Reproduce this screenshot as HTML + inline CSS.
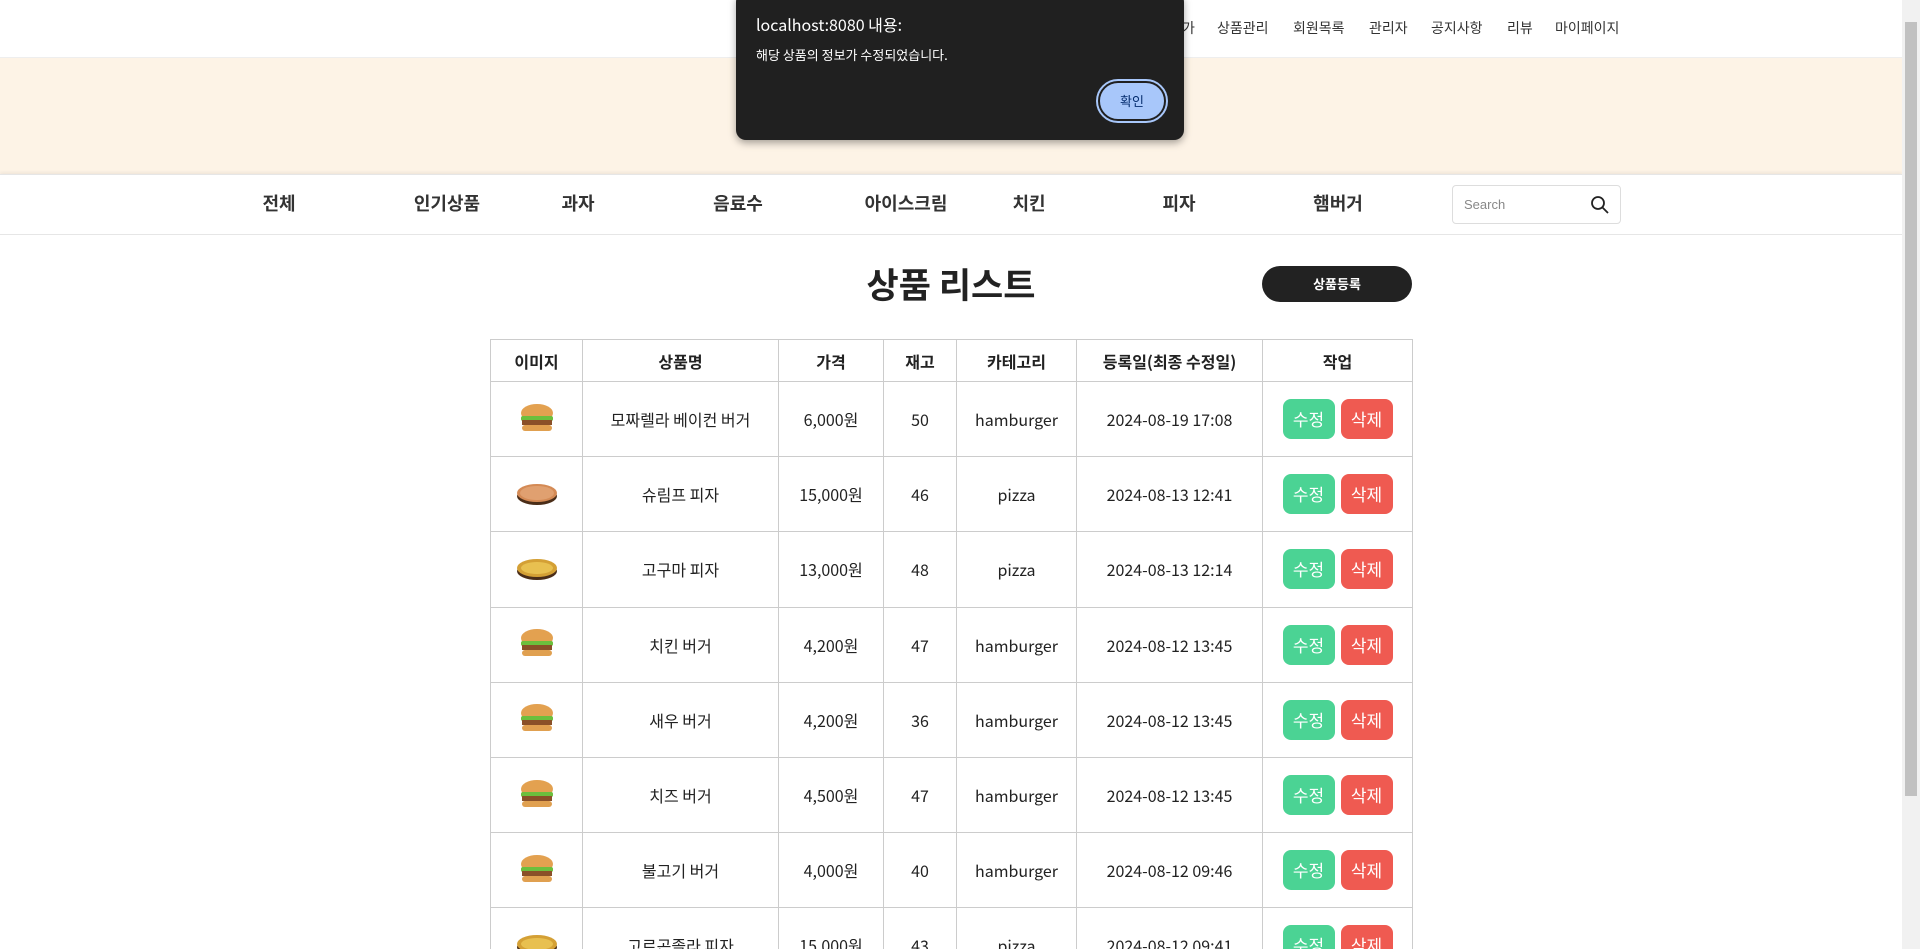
<!DOCTYPE html>
<html><head><meta charset="utf-8">
<style>
*{margin:0;padding:0;box-sizing:border-box}
html,body{width:1920px;height:949px;overflow:hidden}
body{background:#fff;font-family:"Liberation Sans","Noto Sans CJK KR",sans-serif;color:#222;position:relative}
#wrap{position:absolute;left:0;top:0;width:1920px;height:949px;overflow:hidden}
.top{position:absolute;left:0;top:0;width:1902px;height:58px;border-bottom:1px solid #eee;background:#fff}
.top span{position:absolute;top:18px;font-size:14px;color:#333;font-family:"Noto Sans CJK KR",sans-serif}
.banner{position:absolute;left:0;top:58px;width:1902px;height:116px;background:#fdf3e6}
.cat{position:absolute;left:0;top:174px;width:1902px;height:61px;border-top:1px solid #e6e6e6;border-bottom:1px solid #e6e6e6;box-shadow:0 -2px 3px rgba(0,0,0,.05);background:#fff}
.cat span{position:absolute;top:15px;font-size:18px;font-weight:bold;color:#333;transform:translateX(-50%);font-family:"Noto Sans CJK KR",sans-serif}
.search{position:absolute;left:1452px;top:185px;width:169px;height:39px;border:1px solid #ddd;border-radius:4px}
.search span{position:absolute;left:11px;top:11px;font-size:13px;color:#888}
.search svg{position:absolute;right:10px;top:9px}
h1{position:absolute;left:0;width:1902px;text-align:center;top:258px;font-size:35px;font-weight:bold;color:#222;font-family:"Noto Sans CJK KR",sans-serif}
.reg{position:absolute;left:1262px;top:266px;width:150px;height:36px;border-radius:18px;background:#222;color:#fff;font-size:13px;font-weight:bold;text-align:center;line-height:36px;font-family:"Noto Sans CJK KR",sans-serif}
table{position:absolute;left:490px;top:339px;border-collapse:collapse;table-layout:fixed;font-size:16px;font-family:"Noto Sans CJK KR",sans-serif}
td,th{border:1px solid #ccc;text-align:center;color:#222;line-height:20px}
th{height:42px;font-weight:bold;font-size:16px}
td{height:75.2px}
.b{display:inline-block;width:52px;height:40px;line-height:40px;border-radius:8px;color:#fff;font-size:17px;vertical-align:middle}
.g{background:#4bd394}.r{background:#ef5a51;margin-left:6px}
.dlg{position:absolute;left:736px;top:-8px;width:448px;height:148px;background:#202020;border-radius:10px;box-shadow:0 3px 8px rgba(0,0,0,.35);color:#fff;font-family:"Noto Sans CJK KR",sans-serif}
.dlg .t{position:absolute;left:20px;top:20px;font-size:16px}
.dlg .m{position:absolute;left:20px;top:53px;font-size:13px}
.dlg .ok{position:absolute;left:362px;top:89px;width:68px;height:40px;border-radius:20px;background:#a8c7fa;border:2px solid #202020;outline:2px solid #a8c7fa;color:#062e6f;font-size:13px;text-align:center;line-height:36px}
.sb{position:absolute;left:1902px;top:0;width:18px;height:949px;background:#f1f1f1}
.sb div{position:absolute;left:3px;top:22px;width:12px;height:774px;background:#c1c1c1}
</style></head><body><div id="wrap">
<div class="top">
<span style="left:1182px">가</span><span style="left:1217px">상품관리</span><span style="left:1293px">회원목록</span><span style="left:1369px">관리자</span><span style="left:1431px">공지사항</span><span style="left:1507px">리뷰</span><span style="left:1555px">마이페이지</span>
</div>
<div class="banner"></div>
<div class="cat">
<span style="left:279px">전체</span><span style="left:447px">인기상품</span><span style="left:578px">과자</span><span style="left:738px">음료수</span><span style="left:906px">아이스크림</span><span style="left:1029px">치킨</span><span style="left:1179px">피자</span><span style="left:1338px">햄버거</span>
</div>
<div class="search"><span>Search</span><svg width="20" height="20" viewBox="0 0 20 20"><circle cx="8" cy="8" r="6" fill="none" stroke="#222" stroke-width="1.8"/><line x1="12.5" y1="12.5" x2="18" y2="18" stroke="#222" stroke-width="1.8"/></svg></div>
<h1>상품 리스트</h1>
<div class="reg">상품등록</div>
<svg width="0" height="0" style="position:absolute"><defs>
<g id="bg"><ellipse cx="21" cy="15" rx="16" ry="9" fill="#e3a150"/><rect x="5" y="18" width="32" height="5" rx="2" fill="#6cbf3d"/><rect x="6" y="22" width="30" height="5" fill="#8a5028"/><rect x="6" y="27" width="30" height="6" rx="3" fill="#e0a050"/></g>
<g id="pz"><ellipse cx="21" cy="23" rx="20" ry="9" fill="#4a2d18"/><ellipse cx="21" cy="20" rx="20" ry="9" fill="#d48a55"/><ellipse cx="21" cy="20" rx="17" ry="7" fill="#e0a070"/></g>
<g id="pz2"><ellipse cx="21" cy="23" rx="20" ry="9" fill="#4a2d18"/><ellipse cx="21" cy="20" rx="20" ry="9" fill="#d4a035"/><ellipse cx="21" cy="20" rx="16" ry="6" fill="#e8c050"/></g>
</defs></svg>
<table>
<colgroup><col style="width:92px"><col style="width:196px"><col style="width:105px"><col style="width:73px"><col style="width:120px"><col style="width:186px"><col style="width:150px"></colgroup>
<tr><th>이미지</th><th>상품명</th><th>가격</th><th>재고</th><th>카테고리</th><th>등록일(최종 수정일)</th><th>작업</th></tr>
<tr><td><svg width="42" height="40"><use href="#bg"/></svg></td><td>모짜렐라 베이컨 버거</td><td>6,000원</td><td>50</td><td>hamburger</td><td>2024-08-19 17:08</td><td><span class="b g">수정</span><span class="b r">삭제</span></td></tr>
<tr><td><svg width="42" height="40"><use href="#pz"/></svg></td><td>슈림프 피자</td><td>15,000원</td><td>46</td><td>pizza</td><td>2024-08-13 12:41</td><td><span class="b g">수정</span><span class="b r">삭제</span></td></tr>
<tr><td><svg width="42" height="40"><use href="#pz2"/></svg></td><td>고구마 피자</td><td>13,000원</td><td>48</td><td>pizza</td><td>2024-08-13 12:14</td><td><span class="b g">수정</span><span class="b r">삭제</span></td></tr>
<tr><td><svg width="42" height="40"><use href="#bg"/></svg></td><td>치킨 버거</td><td>4,200원</td><td>47</td><td>hamburger</td><td>2024-08-12 13:45</td><td><span class="b g">수정</span><span class="b r">삭제</span></td></tr>
<tr><td><svg width="42" height="40"><use href="#bg"/></svg></td><td>새우 버거</td><td>4,200원</td><td>36</td><td>hamburger</td><td>2024-08-12 13:45</td><td><span class="b g">수정</span><span class="b r">삭제</span></td></tr>
<tr><td><svg width="42" height="40"><use href="#bg"/></svg></td><td>치즈 버거</td><td>4,500원</td><td>47</td><td>hamburger</td><td>2024-08-12 13:45</td><td><span class="b g">수정</span><span class="b r">삭제</span></td></tr>
<tr><td><svg width="42" height="40"><use href="#bg"/></svg></td><td>불고기 버거</td><td>4,000원</td><td>40</td><td>hamburger</td><td>2024-08-12 09:46</td><td><span class="b g">수정</span><span class="b r">삭제</span></td></tr>
<tr><td><svg width="42" height="40"><use href="#pz2"/></svg></td><td>고르곤졸라 피자</td><td>15,000원</td><td>43</td><td>pizza</td><td>2024-08-12 09:41</td><td><span class="b g">수정</span><span class="b r">삭제</span></td></tr>
</table>
<div class="dlg"><div class="t">localhost:8080 내용:</div><div class="m">해당 상품의 정보가 수정되었습니다.</div><div class="ok">확인</div></div>
<div class="sb"><div></div></div>
</div></body></html>
